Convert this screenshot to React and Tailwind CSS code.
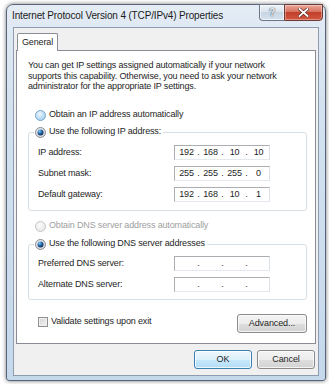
import React from 'react';

const FONT = "font-['Liberation_Sans',Arial,sans-serif]";

function Radio({ state }) {
  // state: 'hover' | 'checked' | 'disabled'
  return (
    <svg width="11" height="11" viewBox="0 0 11 11" className="shrink-0">
      <defs>
        <radialGradient id="rHover" cx="40%" cy="35%" r="70%">
          <stop offset="0%" stopColor="#eef7fd" />
          <stop offset="100%" stopColor="#9fcdee" />
        </radialGradient>
        <radialGradient id="rRing" cx="40%" cy="35%" r="70%">
          <stop offset="0%" stopColor="#f6f6f6" />
          <stop offset="100%" stopColor="#cfd3d8" />
        </radialGradient>
        <radialGradient id="rDot" cx="35%" cy="30%" r="75%">
          <stop offset="0%" stopColor="#8cd0f5" />
          <stop offset="45%" stopColor="#2a6fb0" />
          <stop offset="100%" stopColor="#0b2a52" />
        </radialGradient>
        <radialGradient id="rDis" cx="40%" cy="35%" r="70%">
          <stop offset="0%" stopColor="#fbfbfb" />
          <stop offset="100%" stopColor="#e6e6e6" />
        </radialGradient>
      </defs>
      {state === 'hover' && (
        <circle cx="5.5" cy="5.5" r="5" fill="url(#rHover)" stroke="#7aa6c9" strokeWidth="1" />
      )}
      {state === 'checked' && (
        <>
          <circle cx="5.5" cy="5.5" r="5" fill="url(#rRing)" stroke="#8a8f95" strokeWidth="1" />
          <circle cx="5.5" cy="5.5" r="3" fill="url(#rDot)" />
        </>
      )}
      {state === 'disabled' && (
        <circle cx="5.5" cy="5.5" r="5" fill="url(#rDis)" stroke="#c2c4c6" strokeWidth="1" />
      )}
    </svg>
  );
}

function IpBox({ parts }) {
  return (
    <div className="w-[96px] h-[15px] border border-[#abadb3] border-b-[#e3e9ef] border-r-[#dbdfe6] bg-white flex items-center pl-[2px] text-[#1e1e1e]">
      {parts.map((p, i) => (
        <React.Fragment key={i}>
          <span className="w-[19px] text-center leading-[13px]">{p}</span>
          {i < 3 && <span className="w-[5px] text-center leading-[13px]">.</span>}
        </React.Fragment>
      ))}
    </div>
  );
}

function Row({ label, parts }) {
  return (
    <div className="flex items-center h-[15px]">
      <span className="w-[136px]">{label}</span>
      <IpBox parts={parts} />
    </div>
  );
}

function WinButton({ children, primary, className = '' }) {
  return (
    <button
      className={
        'h-[19px] rounded-[3px] border text-[9px] tracking-[-0.1px] text-[#1e1e1e] shadow-[inset_0_0_0_1px_rgba(255,255,255,0.75)] ' +
        (primary
          ? 'border-[#3c7fb1] bg-[linear-gradient(#eef7fd_0%,#dcf0fc_50%,#c6e8fb_51%,#b4def6_100%)] '
          : 'border-[#8a8a8a] bg-[linear-gradient(#f4f4f4_0%,#ececec_50%,#dedede_51%,#d2d2d2_100%)] ') +
        className
      }
    >
      {children}
    </button>
  );
}

export default function App() {
  return (
    <div className={`w-[329px] h-[384px] bg-white pt-[4px] pl-[6px] ${FONT}`}>
      {/* Window */}
      <div className="w-[320px] h-[377px] flex flex-col border border-[#56657a] rounded-t-[7px] rounded-b-[3px] bg-[linear-gradient(180deg,#e4ecf5_0%,#d4e2f0_25%,#c5d8ec_100%)] shadow-[0_0_4px_rgba(0,0,0,0.55)] px-[6px] pb-[4px]">
        {/* Title bar */}
        <div className="h-[22px] -mx-[6px] pl-[5px] pr-[2px] flex items-start justify-between">
          <span className="mt-[5px] text-[10px] leading-[12px] tracking-[-0.15px] text-[#1b1b1b]">
            Internet Protocol Version 4 (TCP/IPv4) Properties
          </span>
          <div className="flex -mt-px">
            <div className="w-[25px] h-[17px] border border-[#6b7788] border-r-0 rounded-bl-[4px] bg-[linear-gradient(#eef3f8_0%,#dbe4ee_45%,#c7d4e2_50%,#d6e2ee_100%)] flex items-center justify-center shadow-[inset_0_0_0_1px_rgba(255,255,255,0.6)]">
              <span className="text-[11px] font-bold leading-none text-[#eef2f6] [text-shadow:0_0_1px_#3f4b5a,0_0_1px_#3f4b5a]">?</span>
            </div>
            <div className="w-[39px] h-[17px] border border-[#6b3a36] rounded-br-[4px] bg-[linear-gradient(#eaa89a_0%,#d8725f_45%,#c33f2c_50%,#d2563f_100%)] flex items-center justify-center shadow-[inset_0_0_0_1px_rgba(255,255,255,0.35)]">
              <svg width="11" height="9" viewBox="0 0 11 9">
                <path d="M1.5 1 L9.5 8 M9.5 1 L1.5 8" stroke="#5a2a24" strokeWidth="3.2" strokeLinecap="square" />
                <path d="M1.5 1 L9.5 8 M9.5 1 L1.5 8" stroke="#ffffff" strokeWidth="1.8" strokeLinecap="square" />
              </svg>
            </div>
          </div>
        </div>

        {/* Client area */}
        <div className="flex-1 flex flex-col border border-[#8d9cae] bg-[#f0f0f0] px-[2px] pt-[5px] pb-[6px] text-[9px] tracking-[-0.15px] text-[#1e1e1e]">
          {/* Tabs */}
          <div className="flex">
            <div className="ml-[1px] w-[41px] h-[18px] -mb-px relative z-10 border border-b-0 border-[#898c95] bg-white flex items-center justify-center rounded-t-[2px]">
              General
            </div>
          </div>

          {/* Tab panel */}
          <div className="flex-1 border border-[#898c95] bg-white flex flex-col pl-[11px] pr-[8px] pt-[9px]">
            <p className="leading-[10.5px]">
              You can get IP settings assigned automatically if your network
              <br />
              supports this capability. Otherwise, you need to ask your network
              <br />
              administrator for the appropriate IP settings.
            </p>

            <div className="mt-[17.5px] h-[12px] flex items-center gap-[3px] pl-[7px]">
              <Radio state="hover" />
              <span>Obtain an IP address automatically</span>
            </div>

            <fieldset className="mt-[5px] border border-[#d5dfe5] rounded-[3px]">
              <legend className="ml-[5px] px-[1px] h-[12px] flex items-center gap-[3px]">
                <Radio state="checked" />
                <span className="pr-[1px]">Use the following IP address:</span>
              </legend>
              <div className="pl-[9px] pt-[7px] pb-[8px] flex flex-col gap-[6px]">
                <Row label="IP address:" parts={['192', '168', '10', '10']} />
                <Row label="Subnet mask:" parts={['255', '255', '255', '0']} />
                <Row label="Default gateway:" parts={['192', '168', '10', '1']} />
              </div>
            </fieldset>

            <div className="mt-[9px] h-[12px] flex items-center gap-[3px] pl-[7px] text-[#a0a0a0]">
              <Radio state="disabled" />
              <span>Obtain DNS server address automatically</span>
            </div>

            <fieldset className="mt-[6px] border border-[#d5dfe5] rounded-[3px]">
              <legend className="ml-[5px] px-[1px] h-[12px] flex items-center gap-[3px]">
                <Radio state="checked" />
                <span className="pr-[1px]">Use the following DNS server addresses</span>
              </legend>
              <div className="pl-[9px] pt-[6px] pb-[7px] flex flex-col gap-[6px]">
                <Row label="Preferred DNS server:" parts={['', '', '', '']} />
                <Row label="Alternate DNS server:" parts={['', '', '', '']} />
              </div>
            </fieldset>

            <div className="mt-[14px] flex items-start justify-between">
              <div className="ml-[10px] mt-[1px] flex items-center gap-[3px]">
                <span className="w-[10px] h-[10px] border border-[#8e8f8f] bg-[linear-gradient(135deg,#d4d4d4,#f4f4f4)] shadow-[inset_0_0_0_1px_#f0f0f0]" />
                <span>Validate settings upon exit</span>
              </div>
              <WinButton className="w-[70px]">Advanced...</WinButton>
            </div>
          </div>

          {/* Dialog buttons */}
          <div className="mt-[6px] pr-[1px] flex justify-end gap-[5px]">
            <WinButton primary className="w-[58px]">OK</WinButton>
            <WinButton className="w-[58px]">Cancel</WinButton>
          </div>
        </div>
      </div>
    </div>
  );
}
